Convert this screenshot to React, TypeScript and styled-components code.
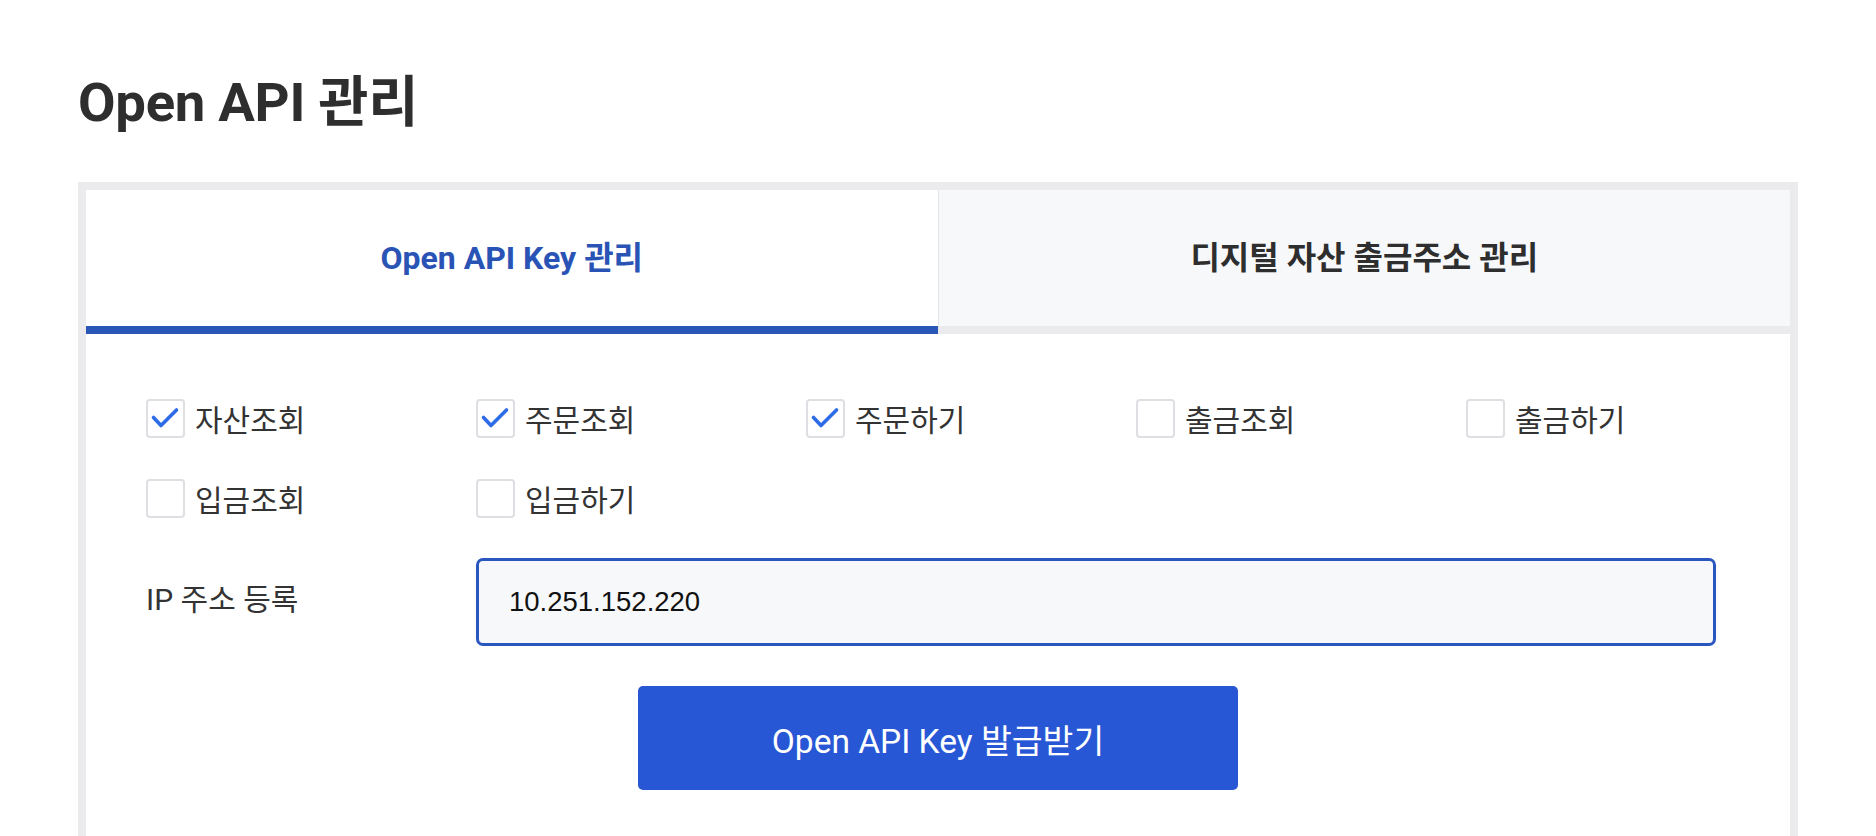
import { useState } from 'react'
import styled, { createGlobalStyle } from 'styled-components'

const GlobalStyle = createGlobalStyle`
  body {
    margin: 0;
    background: #ffffff;
    font-family: Roboto, "Noto Sans CJK KR", sans-serif;
    color: #333333;
  }
`

const Page = styled.div`
  padding: 72px 78px 0;
`

const Title = styled.h1`
  margin: 0 0 50px;
  font-size: 54.5px;
  line-height: 60px;
  font-weight: 700;
  color: #2e2e2e;
  letter-spacing: -0.3px;
`

const Panel = styled.div`
  border: 8px solid #ebebed;
  border-bottom: none;
  background: #ffffff;
`

const Tabs = styled.div`
  display: flex;
`

const Tab = styled.button<{ $active?: boolean }>`
  flex: 1;
  height: 144px;
  border: none;
  border-bottom: 8px solid ${(p) => (p.$active ? '#2a56b8' : '#ebebed')};
  border-left: ${(p) => (p.$active ? 'none' : '1px solid #e3e5e9')};
  background: ${(p) => (p.$active ? '#ffffff' : '#f7f8fa')};
  color: ${(p) => (p.$active ? '#2a53b6' : '#2e2e2e')};
  font-family: Roboto, "Noto Sans CJK KR", sans-serif;
  font-size: 32px;
  font-weight: 700;
  padding: 0 0 6px;
  cursor: pointer;
`

const Content = styled.div`
  padding: 64px 60px 60px;
`

const CheckGrid = styled.div`
  display: grid;
  grid-template-columns: repeat(5, 330px);
  row-gap: 40px;
`

const CheckItem = styled.label`
  display: flex;
  align-items: center;
  gap: 10px;
  height: 40px;
  font-size: 30px;
  color: #333333;
  cursor: pointer;
`

const Box = styled.span`
  width: 39px;
  height: 39px;
  box-sizing: border-box;
  border: 2px solid #dedee3;
  border-radius: 4px;
  background: #ffffff;
  display: flex;
  align-items: center;
  justify-content: center;
`

const IpRow = styled.div`
  display: flex;
  align-items: center;
  margin-top: 40px;
  padding-right: 14px;
`

const IpLabel = styled.div`
  width: 330px;
  flex-shrink: 0;
  font-size: 30px;
  color: #333333;
  padding-bottom: 10px;
`

const IpInput = styled.input`
  flex: 1;
  height: 88px;
  box-sizing: border-box;
  border: 3px solid #2a56c0;
  border-radius: 7px;
  background: #f7f8fa;
  padding: 0 30px;
  font-family: "Liberation Sans", Arial, sans-serif;
  font-size: 27.5px;
  color: #111111;
  outline: none;
`

const Submit = styled.button`
  display: block;
  width: 600px;
  height: 104px;
  margin: 40px auto 0;
  border: none;
  border-radius: 5px;
  background: #2857d5;
  color: #ffffff;
  font-family: Roboto, "Noto Sans CJK KR", sans-serif;
  font-size: 33.5px;
  font-weight: 400;
  cursor: pointer;
`

const perms = [
  { label: '자산조회', on: true },
  { label: '주문조회', on: true },
  { label: '주문하기', on: true },
  { label: '출금조회', on: false },
  { label: '출금하기', on: false },
  { label: '입금조회', on: false },
  { label: '입금하기', on: false },
]

function CheckMark() {
  return (
    <svg width="35" height="35" viewBox="0 0 35 35">
      <path d="M5.5 16.5 L13 24.5 L28.5 9" fill="none" stroke="#2e6be6" strokeWidth="3.6" strokeLinecap="round" strokeLinejoin="round" />
    </svg>
  )
}

export default function App() {
  const [checks, setChecks] = useState(perms.map((p) => p.on))
  const [ip, setIp] = useState('10.251.152.220')

  const toggle = (i: number) => setChecks((c) => c.map((v, j) => (j === i ? !v : v)))

  return (
    <>
      <GlobalStyle />
      <Page>
        <Title>Open API 관리</Title>
        <Panel>
          <Tabs>
            <Tab $active>Open API Key 관리</Tab>
            <Tab>디지털 자산 출금주소 관리</Tab>
          </Tabs>
          <Content>
            <CheckGrid>
              {perms.map((p, i) => (
                <CheckItem key={p.label} onClick={() => toggle(i)}>
                  <Box>{checks[i] && <CheckMark />}</Box>
                  {p.label}
                </CheckItem>
              ))}
            </CheckGrid>
            <IpRow>
              <IpLabel>IP 주소 등록</IpLabel>
              <IpInput value={ip} onChange={(e) => setIp(e.target.value)} />
            </IpRow>
            <Submit>Open API Key 발급받기</Submit>
          </Content>
        </Panel>
      </Page>
    </>
  )
}
